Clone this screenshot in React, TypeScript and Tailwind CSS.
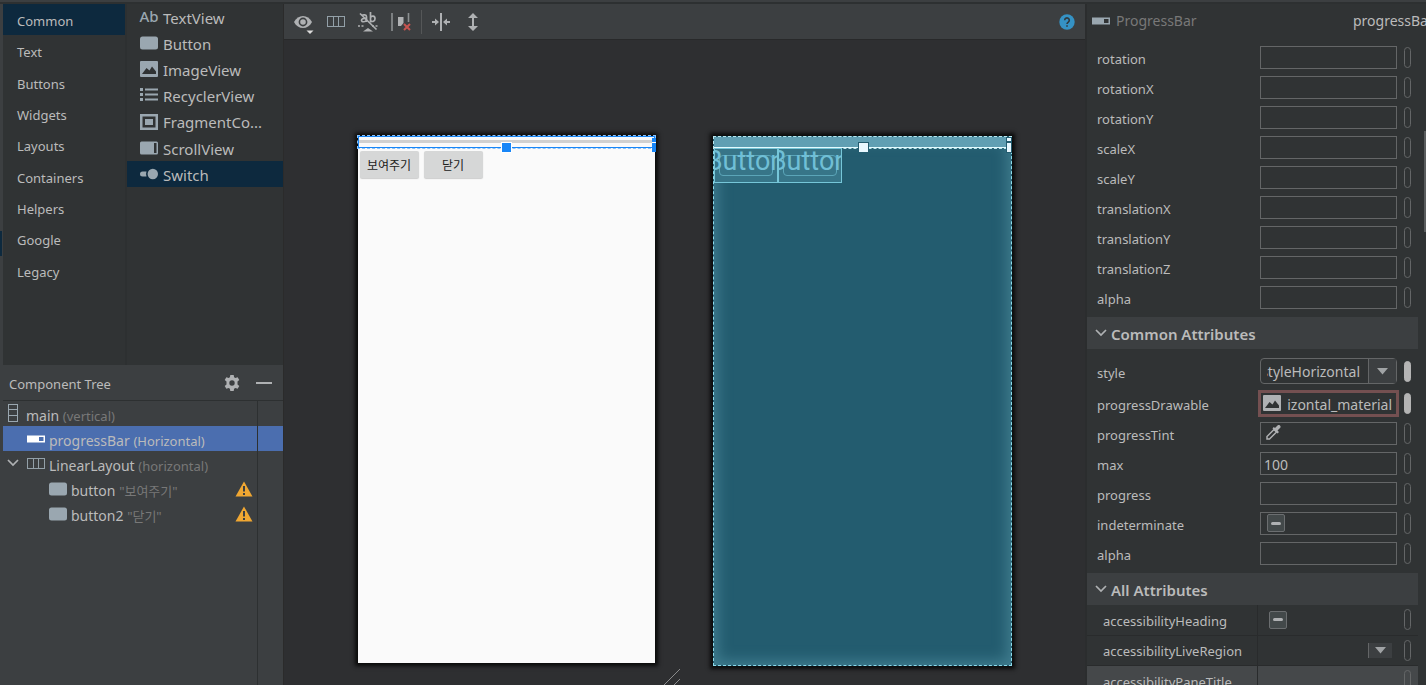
import React from "react";

type IconProps = { className?: string };

const SANS = "font-['Noto_Sans','Noto_Sans_CJK_KR',sans-serif]";

function ButtonIcon() {
  return (
    <svg width="18" height="14" viewBox="0 0 18 14" className="shrink-0">
      <rect width="18" height="13" y="0.5" rx="2.5" fill="#9aa7b0" />
    </svg>
  );
}

function ImageIcon({ className = "text-[#9aa7b0]" }: IconProps) {
  return (
    <svg width="18" height="16" viewBox="0 0 18 16" className={`shrink-0 ${className}`}>
      <path
        fill="currentColor"
        fillRule="evenodd"
        d="M1 0h16a1 1 0 0 1 1 1v14a1 1 0 0 1-1 1H1a1 1 0 0 1-1-1V1a1 1 0 0 1 1-1zM2 13h14v-2.500L12 5.500 9.500 9.500 6.500 7z"
      />
    </svg>
  );
}

function ListIcon() {
  return (
    <svg width="18" height="14" viewBox="0 0 18 14" className="shrink-0" fill="#9aa7b0">
      <path d="M0 0h3v3H0zM0 5h3v3H0zM0 10h3v3H0zM5 0.500h13v2H5zM5 5.500h13v2H5zM5 10.500h13v2H5z" />
    </svg>
  );
}

function FragmentIcon() {
  return (
    <svg width="18" height="16" viewBox="0 0 18 16" className="shrink-0">
      <rect x="1.250" y="1.250" width="15.500" height="13.500" fill="none" stroke="#9aa7b0" strokeWidth="2.500" />
      <rect x="5" y="5" width="8" height="6" fill="#9aa7b0" />
    </svg>
  );
}

function ScrollIcon() {
  return (
    <svg width="18" height="14" viewBox="0 0 18 14" className="shrink-0">
      <rect width="18" height="13" y="0.500" rx="1.500" fill="#9aa7b0" />
      <rect x="14" y="2" width="2.500" height="10" fill="#303334" />
    </svg>
  );
}

function SwitchIcon() {
  return (
    <svg width="18" height="12" viewBox="0 0 18 12" className="shrink-0" fill="#9aa7b0">
      <path d="M2.500 3.500H6.500a7 7 0 0 0 0 5H2.500a2.500 2.500 0 0 1 0-5z" />
      <circle cx="12.800" cy="6" r="5.200" />
    </svg>
  );
}

function ProgressIcon({ className = "text-[#9aa7b0]" }: IconProps) {
  return (
    <svg width="18" height="8" viewBox="0 0 18 8" className={`shrink-0 ${className}`}>
      <path fill="currentColor" fillRule="evenodd" d="M0 0.500h18v7H0zM12 2h4.500v4H12z" />
    </svg>
  );
}

function VerticalLayoutIcon() {
  return (
    <svg width="10" height="18" viewBox="0 0 10 18" className="shrink-0" fill="none" stroke="#9aa7b0">
      <rect x="0.500" y="0.500" width="9" height="17" />
      <path d="M0.500 5.500h9M0.500 11.500h9" />
    </svg>
  );
}

function HorizontalLayoutIcon() {
  return (
    <svg width="18" height="11" viewBox="0 0 18 11" className="shrink-0" fill="none" stroke="#93a0a8">
      <rect x="0.500" y="0.500" width="17" height="10" />
      <path d="M6.500 0.500v10M11.500 0.500v10" />
    </svg>
  );
}

function Chevron() {
  return (
    <svg width="12" height="8" viewBox="0 0 12 8" className="shrink-0" fill="none" stroke="#afb1b3" strokeWidth="1.700">
      <path d="M1 1l5 5 5-5" />
    </svg>
  );
}

function WarningIcon() {
  return (
    <svg width="18" height="16" viewBox="0 0 18 16" role="img" aria-label="Warning">
      <path d="M9 0.500L17.500 15.500H0.500z" fill="#f0a732" />
      <path d="M8 5h2v5.500H8zM8 12h2v2H8z" fill="#3c3f41" />
    </svg>
  );
}

function GearIcon() {
  return (
    <svg width="16" height="16" viewBox="0 0 16 16" fill="#afb1b3">
      <path
        fillRule="evenodd"
        d="M6.300 0h3.400l.4 2.200 1.300.8 2.200-.8 1.700 2.900-1.800 1.500v2.800l1.800 1.500-1.700 2.900-2.200-.8-1.300.8-.4 2.200H6.300l-.4-2.200-1.300-.8-2.200.8L.7 10.900l1.800-1.500V6.600L.7 5.100l1.700-2.900 2.200.8 1.300-.8zM8 5.300a2.700 2.700 0 1 0 0 5.400 2.700 2.700 0 0 0 0-5.400z"
      />
    </svg>
  );
}

function EyeIcon() {
  return (
    <svg width="20" height="20" viewBox="0 0 20 20">
      <path d="M0 8C2 4 5.500 2 9 2s7 2 9 6c-2 4-5.500 6-9 6S2 12 0 8z" fill="#afb1b3" />
      <circle cx="9" cy="8" r="3.600" fill="none" stroke="#3c3f41" strokeWidth="1.600" />
      <path d="M12.500 16.500h7L16 20z" fill="#dcdcdc" />
    </svg>
  );
}

function AutoConnectIcon() {
  return (
    <svg width="20" height="20" viewBox="0 0 20 20" fill="none" stroke="#afb1b3" strokeWidth="1.700">
      <path d="M4 3.500c1-1 4.500-1.200 4.500 1.200V10M8.500 6.500C5 6 3.500 7 3.500 8.300c0 2 4 2 5-.3M12.500 0v10.500M12.500 5.500c1-2 4.500-2 4.500 1.200s-3.500 3.500-4.500 1.600" />
      <path d="M2 1.500l16.500 16" strokeWidth="1.700" />
      <path d="M0 14h7M14 14h6" strokeDasharray="2 1.500" strokeWidth="1.400" />
      <path d="M5 19.500h10l-5-3.500z" fill="#afb1b3" stroke="none" />
    </svg>
  );
}

function ClearIcon() {
  return (
    <svg width="20" height="18" viewBox="0 0 20 18" fill="none">
      <path d="M1 0v18M17.500 0v9" stroke="#8c9092" strokeWidth="1.600" />
      <path d="M7 4h5.500v6L10 13H7z" fill="#afb1b3" />
      <path d="M13 11l6 6M19 11l-6 6" stroke="#c75450" strokeWidth="2" />
    </svg>
  );
}

function PackIcon() {
  return (
    <svg width="18" height="18" viewBox="0 0 18 18" fill="#afb1b3">
      <path d="M8 0h2v18H8zM0 8h3V5.500L7 9l-4 3.500V10H0zM18 8h-3V5.500L11 9l4 3.500V10h3z" />
    </svg>
  );
}

function ExpandIcon() {
  return (
    <svg width="10" height="18" viewBox="0 0 10 18" fill="#afb1b3">
      <path d="M5 0l5 5H6v8h4l-5 5-5-5h4V5H0z" />
    </svg>
  );
}

function DropperIcon() {
  return (
    <svg width="16" height="16" viewBox="0 0 16 16" className="shrink-0">
      <path d="M2 14v-2.500l7-7 2.500 2.500-7 7z" fill="none" stroke="#afb1b3" strokeWidth="1.500" />
      <path d="M7.500 3.500l5 5 1.500-1.500-1.500-1.500 2.500-2.500a1.600 1.600 0 0 0-2.500-2.500L10 3 8.800 1.900z" fill="#afb1b3" />
    </svg>
  );
}

const categories = ["Common", "Text", "Buttons", "Widgets", "Layouts", "Containers", "Helpers", "Google", "Legacy"];

const widgets: { name: string; icon: React.ReactNode }[] = [
  { name: "TextView", icon: <span className="pb-0.5 text-[15px] font-medium text-[#9aa7b0]">Ab</span> },
  { name: "Button", icon: <ButtonIcon /> },
  { name: "ImageView", icon: <ImageIcon /> },
  { name: "RecyclerView", icon: <ListIcon /> },
  { name: "FragmentCo...", icon: <FragmentIcon /> },
  { name: "ScrollView", icon: <ScrollIcon /> },
  { name: "Switch", icon: <SwitchIcon /> },
];

function Palette() {
  return (
    <section aria-label="Palette" className="flex h-[361px] shrink-0 bg-[#303334]">
      <ul className="grid h-[282px] w-[122px] grid-rows-9 text-[13px]">
        {categories.map((name, i) => (
          <li key={name} className={i === 0 ? "bg-[#0d293e]" : ""}>
            <button className="flex h-full w-full items-center pt-1 pl-3.5 text-left">{name}</button>
          </li>
        ))}
      </ul>
      <div className="w-0.5 bg-[#2d3031]" />
      <ul className="grid h-[183px] flex-1 grid-rows-7 text-[15px]">
        {widgets.map((w, i) => (
          <li key={w.name} className={i === 6 ? "bg-[#0d293e]" : ""}>
            <button className="flex h-full w-full items-center gap-1 pl-3 text-left">
              <span className="flex w-5 justify-center">{w.icon}</span>
              <span className="pt-0.5">{w.name}</span>
            </button>
          </li>
        ))}
      </ul>
    </section>
  );
}

function TreeRow(props: {
  pad: string;
  icon: React.ReactNode;
  name: string;
  note: string;
  selected?: boolean;
  warning?: boolean;
  toggle?: boolean;
}) {
  return (
    <li className={`flex h-[25px] ${props.selected ? "bg-[#4b6eaf]" : ""}`}>
      <div className={`flex min-w-0 flex-1 items-center ${props.pad}`}>
        {props.toggle && (
          <button aria-label="Collapse" className="mr-2 flex pb-0.5">
            <Chevron />
          </button>
        )}
        <span className="flex">{props.icon}</span>
        <span className="ml-1 pt-1 text-[14px] whitespace-nowrap">
          {props.name}{" "}
          <span className={`text-[13px] ${props.selected ? "text-[#bbbbbb]" : "text-[#787878]"}`}>{props.note}</span>
        </span>
        {props.warning && (
          <span className="mr-1 ml-auto">
            <WarningIcon />
          </span>
        )}
      </div>
      <div className="w-[26px] border-l border-[#2d3031]" />
    </li>
  );
}

function ComponentTree() {
  return (
    <section aria-label="Component Tree" className="flex min-h-0 flex-1 flex-col bg-[#3c3f41]">
      <header className="flex h-9 shrink-0 items-center border-b border-[#2d3031] pr-[11px] pl-1.5">
        <h2 className="flex-1 pt-1 text-[13px]">Component Tree</h2>
        <button aria-label="Settings" className="mr-4">
          <GearIcon />
        </button>
        <button aria-label="Hide" className="flex h-4 w-4 items-center">
          <span className="h-0.5 w-full bg-[#afb1b3]" />
        </button>
      </header>
      <ul>
        <TreeRow pad="pl-[5px]" icon={<span className="mr-1 pb-0.5"><VerticalLayoutIcon /></span>} name="main" note="(vertical)" />
        <TreeRow
          pad="pl-6"
          icon={<ProgressIcon className="text-white" />}
          name="progressBar"
          note="(Horizontal)"
          selected
        />
        <TreeRow pad="pl-1" icon={<HorizontalLayoutIcon />} name="LinearLayout" note="(horizontal)" toggle />
        <TreeRow pad="pl-[46px]" icon={<ButtonIcon />} name="button" note={'"보여주기"'} warning />
        <TreeRow pad="pl-[46px]" icon={<ButtonIcon />} name="button2" note={'"닫기"'} warning />
      </ul>
      <div className="mr-[25px] flex-1 border-r border-[#2d3031]" />
    </section>
  );
}

function Toolbar() {
  return (
    <div role="toolbar" aria-label="Design tools" className="flex h-9 shrink-0 items-center border-b border-[#28292a] bg-[#3c3f41] px-2.5">
      <button aria-label="View options" className="flex w-5 pt-1"><EyeIcon /></button>
      <button aria-label="Orientation" className="ml-[13px] flex"><HorizontalLayoutIcon /></button>
      <button aria-label="Autoconnect" className="ml-[13px] flex"><AutoConnectIcon /></button>
      <button aria-label="Clear constraints" className="ml-[13px] flex"><ClearIcon /></button>
      <span className="mx-2.5 h-6 w-px bg-[#555758]" />
      <button aria-label="Pack" className="flex"><PackIcon /></button>
      <button aria-label="Expand" className="ml-[18px] flex"><ExpandIcon /></button>
      <button aria-label="Help" className="ml-auto flex">
        <svg width="16" height="16" viewBox="0 0 16 16">
          <circle cx="8" cy="8" r="7.700" fill="#3592c4" />
          <path d="M5.700 6.200a2.300 2.300 0 1 1 3.600 1.900c-.9.600-1.300.9-1.300 1.900M8 11.200v1.600" fill="none" stroke="#31393e" strokeWidth="1.600" />
        </svg>
      </button>
    </div>
  );
}

function DesignPreview() {
  return (
    <div className="relative h-[527px] w-[297px] bg-[#fafafa] shadow-[0_0_4px_3px_#0a0a0a]">
      <div className="h-3 border border-[#1886f7] pt-[3px] outline-1 outline-dashed outline-[#8cc4fb]">
        <div className="h-[3px] bg-[#d0d0d0]" />
      </div>
      <div className="flex gap-[5px] px-0.5 pt-[3px]">
        {["보여주기", "닫기"].map((t) => (
          <button
            key={t}
            className="h-[27px] w-[59px] rounded-xs bg-[#d6d7d7] font-['Noto_Sans_CJK_KR',sans-serif] text-xs text-[#202020] shadow-[0_1px_1px_#cccccc]"
          >
            {t}
          </button>
        ))}
      </div>
      <span className="absolute top-1.5 left-[143px] h-[11px] w-[11px] border border-white bg-[#1886f7]" />
      <span className="absolute top-0.5 -right-px h-1 w-1 bg-[#1886f7]" />
      <span className="absolute top-1.5 -right-px h-2.5 w-1 border-t border-white bg-[#1886f7]" />
    </div>
  );
}

function BlueprintPreview() {
  return (
    <div className="relative h-[530px] w-[299px] border border-dashed border-[#8cdcec] bg-[#235c6f] shadow-[inset_0_0_14px_4px_#407d8f,0_0_4px_3px_#0a0a0a]">
      <div className="h-[11px] border-b border-[#e4fafe] bg-[#609fb3] outline-1 outline-dashed outline-[#b9e8f0]" />
      <div className="flex">
        {[0, 1].map((i) => (
          <div
            key={i}
            className="relative flex h-[35px] w-16 justify-center overflow-hidden border border-[#76c6d8] bg-[#377588]"
          >
            <span className="absolute inset-x-1 top-1.5 bottom-1.5 rounded-sm border border-[#5ba5b8]" />
            <span className="relative shrink-0 font-[Roboto,sans-serif] text-[27px] leading-6 text-[#70bfd6]">
              Button
            </span>
          </div>
        ))}
      </div>
      <span className="absolute top-[5px] left-36 h-[11px] w-[11px] border border-[#235c6f] bg-[#e8f8ff]" />
      <span className="absolute top-0 -right-px h-[5px] w-1.5 border border-[#235c6f] bg-[#e8f8ff]" />
      <span className="absolute top-[5px] -right-px h-[11px] w-1.5 border border-[#235c6f] bg-[#e8f8ff]" />
    </div>
  );
}

function Canvas() {
  return (
    <main className="flex min-w-0 flex-1 flex-col bg-[#2e2f31]">
      <Toolbar />
      <div className="relative flex flex-1 items-start justify-center gap-[58px] pt-24">
        <DesignPreview />
        <BlueprintPreview />
        <svg width="18" height="18" viewBox="0 0 18 18" className="absolute -bottom-px left-[379px]" stroke="#8a8b8c">
          <path d="M0.500 17.500L17 1M10.500 17.500l6.500-6.500" />
        </svg>
      </div>
    </main>
  );
}

function Pill({ filled }: { filled?: boolean }) {
  return (
    <button
      aria-label="Pick resource"
      className={`h-[21px] w-[7px] shrink-0 rounded-full border ${filled ? "border-[#b4b4b4] bg-[#b4b4b4]" : "border-[#646667]"}`}
    />
  );
}

function Row({ id, label, filled, children }: { id: string; label: string; filled?: boolean; children?: React.ReactNode }) {
  return (
    <div className="flex h-[30px] items-center pr-[15px] pl-2.5">
      <label htmlFor={id} className="flex-1 pt-1.5 text-[13px]">
        {label}
      </label>
      {children ?? <input id={id} className="h-[23px] w-[137px] border border-[#646667] bg-transparent px-1 text-[14px]" />}
      <span className="ml-[7px] flex">
        <Pill filled={filled} />
      </span>
    </div>
  );
}

function MinusBox({ id, label }: { id: string; label?: string }) {
  return (
    <span className="relative flex h-[18px] w-[18px] items-center justify-center rounded-xs border border-[#6b6e70] bg-[#43494a]">
      <input id={id} type="checkbox" aria-label={label} className="absolute inset-0 appearance-none" />
      <span className="h-[3px] w-2.5 rounded-xs bg-[#afb1b3]" />
    </span>
  );
}

function SectionHeader({ title }: { title: string }) {
  return (
    <h2 className="mt-[5px] mr-2 flex h-8 shrink-0 items-center gap-1 bg-[#3c3f41] pl-2 text-[15px] font-semibold">
      <button aria-label={`Collapse ${title}`} className="flex">
        <Chevron />
      </button>
      <span className="pt-0.5">{title}</span>
    </h2>
  );
}

function DownArrow() {
  return (
    <svg width="11" height="7" viewBox="0 0 11 7" fill="#a0a3a5">
      <path d="M0 0h11L5.500 6.500z" />
    </svg>
  );
}

const transforms = ["rotation", "rotationX", "rotationY", "scaleX", "scaleY", "translationX", "translationY", "translationZ", "alpha"];

function AttributesPanel() {
  return (
    <aside aria-label="Attributes" className="relative flex w-[339px] shrink-0 flex-col overflow-hidden bg-[#303334]">
      <header className="flex h-[38px] shrink-0 items-center gap-1.5 pb-[5px] pl-[5px]">
        <span className="flex"><ProgressIcon /></span>
        <span className="flex-1 text-[14px] text-[#787878]">ProgressBar</span>
        <span className="w-[73px] overflow-hidden text-[14px] whitespace-nowrap">progressBar</span>
      </header>
      <div className="shrink-0">
        {transforms.map((t) => (
          <Row key={t} id={t} label={t} />
        ))}
      </div>
      <SectionHeader title="Common Attributes" />
      <div className="shrink-0 pt-[7px]">
        <Row id="style" label="style" filled>
          <div className="relative flex h-[26px] w-[137px] rounded-sm border border-[#646667]">
            <span className="flex flex-1 justify-end overflow-hidden pr-2 pl-1.5 text-[14px] leading-6">
              <span className="flex w-[93px] justify-end overflow-hidden pt-px">styleHorizontal</span>
            </span>
            <span className="flex w-7 items-center justify-center border-l border-[#646667] bg-[#3c3f41]">
              <DownArrow />
            </span>
            <select id="style" className="absolute inset-0 w-full opacity-0">
              <option>styleHorizontal</option>
            </select>
          </div>
        </Row>
        <div className="pt-0.5">
          <Row id="progressDrawable" label="progressDrawable" filled>
            <div className="-mx-0.5 flex h-[27px] w-[141px] items-center gap-1 border-[3px] border-[#745051] pr-1 pl-0.5">
              <ImageIcon className="text-[#afb1b3]" />
              <input
                id="progressDrawable"
                defaultValue="izontal_material"
                className="min-w-0 flex-1 bg-transparent pt-0.5 text-right text-[14px]"
              />
            </div>
          </Row>
        </div>
        <Row id="progressTint" label="progressTint">
          <div className="flex h-[23px] w-[137px] items-center border border-[#646667] px-1">
            <DropperIcon />
            <input id="progressTint" className="min-w-0 flex-1 bg-transparent" />
          </div>
        </Row>
        <Row id="max" label="max">
          <input id="max" defaultValue="100" className="h-[23px] w-[137px] border border-[#646667] bg-transparent px-[3px] pt-0.5 text-[14px]" />
        </Row>
        <Row id="progress" label="progress" />
        <Row id="indeterminate" label="indeterminate">
          <div className="flex h-[23px] w-[137px] items-center border border-[#646667] px-1.5">
            <MinusBox id="indeterminate" />
          </div>
        </Row>
        <Row id="alpha2" label="alpha" />
      </div>
      <SectionHeader title="All Attributes" />
      <table className="mr-2 shrink-0 border-collapse text-[13px]">
        <tbody>
          <tr className="h-[30px] border-b border-[#292b2c]">
            <th scope="row" className="w-[170px] border-r border-[#292b2c] pt-1 pl-4 text-left font-normal">accessibilityHeading</th>
            <td className="pr-[7px] pl-[11px]">
              <div className="flex items-center justify-between">
                <MinusBox id="heading" label="accessibilityHeading" />
                <Pill />
              </div>
            </td>
          </tr>
          <tr className="h-[30px] border-b border-[#292b2c]">
            <th scope="row" className="border-r border-[#292b2c] pt-1 pl-4 text-left font-normal">accessibilityLiveRegion</th>
            <td className="pr-[7px]">
              <div className="flex items-center justify-end gap-3">
                <button aria-label="Choose live region" className="flex h-[15px] w-6 items-center justify-center border-l border-[#646667] bg-[#3c3f41]">
                  <DownArrow />
                </button>
                <Pill />
              </div>
            </td>
          </tr>
          <tr className="h-[30px] bg-[#45484a]">
            <th scope="row" className="border-r border-[#292b2c] pt-1 pl-4 text-left font-normal">accessibilityPaneTitle</th>
            <td className="pr-[7px]">
              <div className="flex justify-end">
                <Pill />
              </div>
            </td>
          </tr>
        </tbody>
      </table>
      <span className="absolute top-[127px] right-0 h-[101px] w-0.5 bg-[#5a5d5e]" />
    </aside>
  );
}

export default function App() {
  return (
    <div className={`flex h-screen flex-col overflow-hidden bg-[#2b2b2b] text-[#bbbbbb] ${SANS}`}>
      <div className="h-1 shrink-0 border-b-2 border-[#2d3031] bg-[#3c3f41]" />
      <div className="flex min-h-0 flex-1">
        <div className="w-[3px] shrink-0 bg-[#3c3f41] pt-[227px]">
          <div className="h-[25px] w-0.5 bg-[#0d293e]" />
        </div>
        <div className="flex w-[280px] shrink-0 flex-col">
          <Palette />
          <ComponentTree />
        </div>
        <div className="w-px shrink-0 bg-[#2b2b2b]" />
        <Canvas />
        <div className="w-0.5 shrink-0 bg-[#2b2d2e]" />
        <AttributesPanel />
      </div>
    </div>
  );
}
